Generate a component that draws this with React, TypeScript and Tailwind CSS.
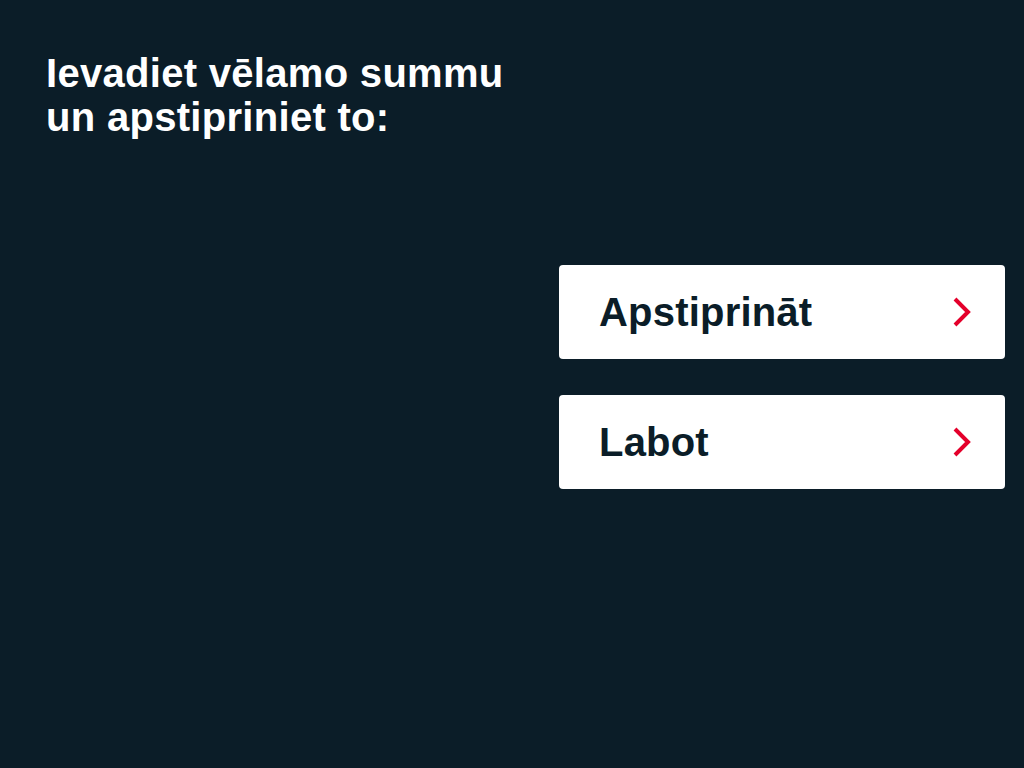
export default function App() {
  const font = { fontFamily: '"Liberation Sans", Arial, sans-serif' };

  const Chevron = () => (
    <svg width="20" height="32" viewBox="0 0 20 32" className="shrink-0">
      <path d="M3 3 L16 16 L3 29" fill="none" stroke="#e4002b" strokeWidth="4" />
    </svg>
  );

  const Option = ({ label }: { label: string }) => (
    <button className="flex h-[94px] w-[446px] items-center justify-between rounded-[4px] bg-white pl-[40px] pr-[33px] text-left">
      <span className="text-[40px] font-bold leading-none tracking-[0.2px] text-[#0b1d28]">{label}</span>
      <Chevron />
    </button>
  );

  return (
    <div className="h-[768px] w-[1024px] bg-[#0b1d28]" style={font}>
      <div className="px-[46px] pt-[51px]">
        <h1 className="text-[40px] font-bold leading-[44px] tracking-[0.3px] text-white">
          Ievadiet vēlamo summu
          <br />
          un apstipriniet to:
        </h1>
      </div>
      <div className="mt-[126px] flex flex-col items-end gap-[36px] pr-[19px]">
        <Option label="Apstiprināt" />
        <Option label="Labot" />
      </div>
    </div>
  );
}
